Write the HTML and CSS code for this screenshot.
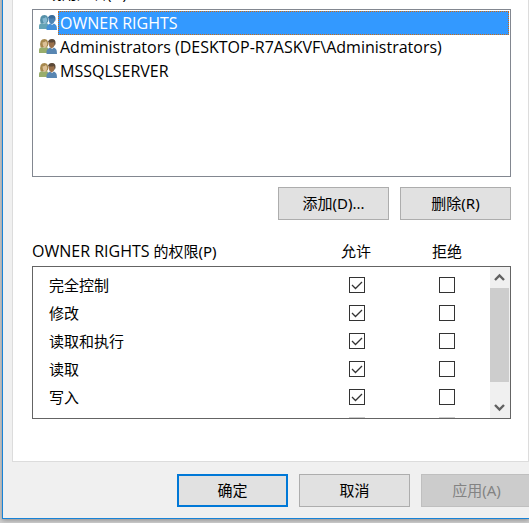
FILE: index.html
```html
<!DOCTYPE html>
<html lang="zh-CN">
<head>
<meta charset="utf-8">
<title>权限</title>
<link rel="stylesheet" href="styles.css">
</head>
<body>
<svg class="defs" aria-hidden="true">
  <symbol id="users" viewBox="0 0 18 17">
    <path class="green" d="M0 15V12Q0 9.500 3 9L5 10L8 9L9.500 11V15Z"/>
    <path class="blond" d="M1.500 9Q0 1 5.500 1Q10 1 9 8L7 9.500H4Z"/>
    <path class="skin" d="M3.500 4.500Q6 4 7 3L8 5V7Q7.500 9.500 5.500 9.500Q3.500 8 3.500 5Z"/>
    <path class="shirt" d="M7.500 16V13Q8 10.500 11 9.500L13 11L15 9.500L17 11Q18 12 18 16Z"/>
    <path class="tan" d="M9.500 3H15.500V7Q15 10 12.500 10.500Q10 9 9.500 6Z"/>
    <path class="hair" d="M9 5Q9 1 13 1Q17 1 16.500 6L15.500 8L15 4Q12 5 9.500 4Z"/>
  </symbol>
</svg>
<main class="dialog">
  <section class="panel">
    <div class="title" id="users-label">组或用户名(G):</div>
    <ul class="users" role="listbox" aria-labelledby="users-label">
      <li class="user selected" role="option" aria-selected="true"><svg class="icon"><use href="#users"/></svg><span class="name">OWNER RIGHTS</span></li>
      <li class="user" role="option"><svg class="icon"><use href="#users"/></svg><span class="name">Administrators (DESKTOP-R7ASKVF\Administrators)</span></li>
      <li class="user" role="option"><svg class="icon"><use href="#users"/></svg><span class="name">MSSQLSERVER</span></li>
    </ul>
    <div class="actions"><button type="button">添加(D)...</button><button type="button">删除(R)</button></div>
    <div class="heading"><span><span class="latin">OWNER RIGHTS</span> 的权限(P)</span><span class="center">允许</span><span class="center">拒绝</span></div>
    <div class="permissions">
      <table>
        <tr><th scope="row">完全控制</th><td><input type="checkbox" aria-label="完全控制 允许" checked></td><td><input type="checkbox" aria-label="完全控制 拒绝"></td></tr>
        <tr><th scope="row">修改</th><td><input type="checkbox" aria-label="修改 允许" checked></td><td><input type="checkbox" aria-label="修改 拒绝"></td></tr>
        <tr><th scope="row">读取和执行</th><td><input type="checkbox" aria-label="读取和执行 允许" checked></td><td><input type="checkbox" aria-label="读取和执行 拒绝"></td></tr>
        <tr><th scope="row">读取</th><td><input type="checkbox" aria-label="读取 允许" checked></td><td><input type="checkbox" aria-label="读取 拒绝"></td></tr>
        <tr><th scope="row">写入</th><td><input type="checkbox" aria-label="写入 允许" checked></td><td><input type="checkbox" aria-label="写入 拒绝"></td></tr>
        <tr><th scope="row"></th><td><input type="checkbox" aria-label="特殊权限 允许" disabled></td><td><input type="checkbox" aria-label="特殊权限 拒绝" disabled></td></tr>
      </table>
      <div class="scrollbar">
        <svg class="arrow" viewBox="0 0 20 21"><path d="M5 13L9.500 8.500L14 13"/></svg>
        <div class="thumb"></div>
        <svg class="arrow bottom" viewBox="0 0 20 21"><path d="M5 8L9.500 12.500L14 8"/></svg>
      </div>
    </div>
  </section>
  <footer class="footer"><button type="button" class="primary">确定</button><button type="button">取消</button><button type="button" disabled>应用(A)</button></footer>
</main>
</body>
</html>
```
FILE: styles.css
```css
* { box-sizing: border-box; }
body {
  margin: 0;
  padding-left: 2px;
  min-height: 100vh;
  overflow: hidden;
  background: #d0d0d0;
  color: #000;
  font: 15px/24px "Noto Sans", "Noto Sans CJK SC", sans-serif;
}
.defs { position: absolute; width: 0; height: 0; }
.green { fill: var(--green, #98ad6c); }
.blond { fill: var(--blond, #a6884e); }
.skin { fill: var(--skin, #dcc096); }
.shirt { fill: var(--shirt, #5886b2); }
.tan { fill: var(--tan, #99704b); }
.hair { fill: var(--hair, #5b4938); }
.selected {
  --green: #64a3b5;
  --blond: #5590a8;
  --skin: #87b9d2;
  --shirt: #438fd8;
  --tan: #4d84b5;
  --hair: #3a6d9c;
}
.dialog {
  background: #f0f0f0;
  border: solid #1883d7;
  border-width: 0 0 1px 1px;
  padding-left: 9px;
  box-shadow: 0 1px 5px #888;
}
.panel {
  background: #fff;
  border: 1px solid #dcdcdc;
  border-top: 0;
  padding: 0 17px 42px 19px;
}
.title { height: 24px; margin-top: -15px; line-height: 16px; }
.users {
  list-style: none;
  margin: 0;
  height: 168px;
  padding: 1px;
  border: 1px solid #828790;
}
.user { display: flex; height: 24px; padding-left: 5px; }
.icon { width: 18px; height: 17px; margin-top: 3px; }
.name, .latin { font-family: "Open Sans", sans-serif; font-size: 16px; }
.latin { line-height: 1; }
.name { padding-left: 3px; white-space: nowrap; }
.selected .name {
  flex: 1;
  margin-left: 1px;
  padding-left: 1px;
  line-height: 22px;
  border: 1px dotted #d06a10;
  background: #3399ff;
  color: #fff;
}
button {
  width: 111px;
  height: 33px;
  flex: none;
  padding: 0 0 2px;
  border: 1px solid #adadad;
  border-radius: 0;
  background: #e1e1e1;
  color: #000;
  font: inherit;
}
.primary { border: 2px solid #0078d7; }
button:disabled { background: #ccc; border-color: #bfbfbf; color: #838383; }
.actions { display: flex; justify-content: flex-end; gap: 11px; margin-top: 10px; }
.heading {
  display: grid;
  grid-template-columns: 1fr 90px 92px;
  margin-top: 19px;
  padding-right: 18px;
}
.center { text-align: center; }
.permissions {
  display: flex;
  height: 153px;
  margin-top: 3px;
  overflow: hidden;
  border: 1px solid #646464;
}
table { flex: 1; border-collapse: collapse; margin-top: 4px; table-layout: fixed; }
tr { height: 28px; }
th { padding: 0 0 0 16px; font-weight: normal; text-align: left; }
td { width: 90px; padding: 0 0 0 4px; text-align: center; }
input {
  appearance: none;
  display: block;
  width: 16px;
  height: 16px;
  margin: 0 auto;
  border: 1px solid #333;
  background: #fff;
}
input:checked {
  background: url("data:image/svg+xml,%3Csvg xmlns='http://www.w3.org/2000/svg' viewBox='0 0 14 14'%3E%3Cpath d='M2 7L5.500 10.500L12 4' fill='none' stroke='%23333' stroke-width='1.300'/%3E%3C/svg%3E") center / 14px;
}
input:disabled { border-color: #ccc; }
.scrollbar { width: 20px; background: #f0f0f0; display: flex; flex-direction: column; }
.arrow { width: 20px; height: 21px; fill: none; stroke: #606060; stroke-width: 2.400; }
.bottom { margin-top: auto; }
.thumb { width: 19px; height: 94px; background: #cdcdcd; }
.footer {
  display: flex;
  justify-content: flex-end;
  gap: 11px;
  margin: 12px -3px 0 0;
  padding-bottom: 11px;
}
```
